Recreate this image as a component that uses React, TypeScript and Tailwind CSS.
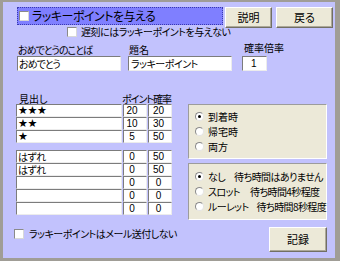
import React from "react";

const sunken =
  "bg-white border border-t-[#7c7c7c] border-l-[#7c7c7c] border-r-[#ececec] border-b-[#ececec] overflow-hidden";

const CheckBox: React.FC = () => (
  <span className="inline-block w-[10px] h-[10px] shrink-0 bg-white border border-t-[#8a8a8a] border-l-[#8a8a8a] border-r-[#d8d8d8] border-b-[#d8d8d8]" />
);

const Radio: React.FC<{ on?: boolean }> = ({ on }) => (
  <span className="w-[9px] h-[9px] shrink-0 rounded-full bg-white border border-t-[#8a8a8a] border-l-[#8a8a8a] border-r-[#e4e4e4] border-b-[#e4e4e4] flex items-center justify-center">
    {on && <span className="w-[3px] h-[3px] rounded-full bg-black" />}
  </span>
);

const WinButton: React.FC<{ label: string; className?: string }> = ({ label, className }) => (
  <button
    className={`bg-[#ece9d8] border border-t-white border-l-white border-r-[#716f64] border-b-[#716f64] shadow-[inset_-1px_-1px_0_#aca899] text-[11px] leading-none flex items-center justify-center ${className ?? ""}`}
  >
    {label}
  </button>
);

const rows1 = [
  { name: "★★★", point: "20", rate: "20", star: true },
  { name: "★★", point: "10", rate: "30", star: true },
  { name: "★", point: "5", rate: "50", star: true },
];

const rows2 = [
  { name: "はずれ", point: "0", rate: "50" },
  { name: "はずれ", point: "0", rate: "50" },
  { name: "", point: "0", rate: "0" },
  { name: "", point: "0", rate: "0" },
  { name: "", point: "0", rate: "0" },
];

const Row: React.FC<{ name: string; point: string; rate: string; star?: boolean }> = ({ name, point, rate, star }) => (
  <div className="flex gap-[1px] h-[13px]">
    <div
      className={`${sunken} w-[106px] px-[1px] flex items-center ${
        star ? "font-['DejaVu_Sans'] text-[11px] leading-[11px] tracking-[-0.3px]" : "text-[10px] leading-[10px] tracking-[-0.5px]"
      }`}
    >
      {name}
    </div>
    <div className={`${sunken} w-[24px] flex items-center justify-center pr-[6px] text-[10px] leading-[10px] font-['Liberation_Sans']`}>{point}</div>
    <div className={`${sunken} w-[24px] flex items-center justify-center pr-[3px] text-[10px] leading-[10px] font-['Liberation_Sans']`}>{rate}</div>
  </div>
);

export default function App() {
  return (
    <div className="w-[340px] h-[261px] border-l-[3px] border-t-[2px] border-r-[5px] border-b-[3px] border-[#a09d96] bg-[#c2c2fd] text-black font-['Noto_Sans_CJK_JP',sans-serif] [font-feature-settings:'palt'] whitespace-nowrap overflow-hidden">
      {/* top row */}
      <div className="flex items-start pt-[5px]">
        <div className="ml-[14px] w-[206px]">
          <div className="h-[18px] bg-[#7f7fff] border border-dotted border-[#3a3ab0] flex items-center pl-[1px] gap-[3px]">
            <CheckBox />
            <span className="text-[12px] tracking-[-0.5px] leading-none">ラッキーポイントを与える</span>
          </div>
          <div className="flex items-center gap-[4px] ml-[50px] mt-[2px] h-[10px]">
            <CheckBox />
            <span className="text-[10px] tracking-[-0.5px] leading-none">遅刻にはラッキーポイントを与えない</span>
          </div>
        </div>
        <div className="flex gap-[4px] ml-[2px]">
          <WinButton label="説明" className="w-[47px] h-[21px]" />
          <WinButton label="戻る" className="w-[57px] h-[21px]" />
        </div>
      </div>

      {/* fields */}
      <div className="flex mt-[8px] ml-[14px] text-[10px] leading-none">
        <div className="flex flex-col w-[104px]">
          <span className="h-[11px] pl-[1px] tracking-[-1px]">おめでとうのことば</span>
          <div className={`${sunken} h-[15px] flex items-center px-[1px] tracking-[-1px]`}>おめでとう</div>
        </div>
        <div className="flex flex-col w-[104px] ml-[7px]">
          <span className="h-[11px] pl-[1px]">題名</span>
          <div className={`${sunken} h-[15px] flex items-center px-[2px] tracking-[-0.5px]`}>ラッキーポイント</div>
        </div>
        <div className="flex flex-col ml-[10px]">
          <span className="h-[11px] pl-[2px] -mt-[2px] mb-[2px]">確率倍率</span>
          <div className={`${sunken} w-[25px] h-[15px] flex items-center pl-[8px] font-['Liberation_Sans']`}>1</div>
        </div>
      </div>

      {/* main */}
      <div className="flex mt-[23px]">
        <div className="ml-[13px] flex flex-col">
          <div className="flex h-[10px] text-[10px] leading-none items-end">
            <span className="w-[106px] pl-[3px]">見出し</span>
            <span className="tracking-[-1px]">ポイント確率</span>
          </div>
          <div className="flex flex-col">
            {rows1.map((r, i) => (
              <Row key={i} {...r} />
            ))}
          </div>
          <div className="flex flex-col mt-[7px]">
            {rows2.map((r, i) => (
              <Row key={i} {...r} />
            ))}
          </div>
        </div>

        <div className="ml-[16px] mt-[10px] flex flex-col gap-[4px] text-[10px] leading-none">
          <div className="w-[139px] h-[55px] bg-[#ece9d8] border border-t-[#9c9c9c] border-l-[#9c9c9c] border-r-white border-b-white flex flex-col justify-center gap-[5px] pl-[6px]">
            <div className="flex items-center gap-[4px] h-[10px]">
              <Radio on />
              <span>到着時</span>
            </div>
            <div className="flex items-center gap-[4px] h-[10px]">
              <Radio />
              <span>帰宅時</span>
            </div>
            <div className="flex items-center gap-[4px] h-[10px]">
              <Radio />
              <span>両方</span>
            </div>
          </div>
          <div className="w-[139px] h-[57px] bg-[#ece9d8] border border-t-[#9c9c9c] border-l-[#9c9c9c] border-r-white border-b-white flex flex-col justify-center gap-[5px] pl-[6px] tracking-[-0.6px]">
            <div className="flex items-center gap-[4px] h-[10px]">
              <Radio on />
              <span>なし</span>
              <span className="ml-[5px]">待ち時間はありません</span>
            </div>
            <div className="flex items-center gap-[4px] h-[10px]">
              <Radio />
              <span>スロット</span>
              <span className="ml-[6px]">待ち時間4秒程度</span>
            </div>
            <div className="flex items-center gap-[4px] h-[10px]">
              <Radio />
              <span>ルーレット</span>
              <span className="ml-[4px]">待ち時間8秒程度</span>
            </div>
          </div>
        </div>
      </div>

      {/* bottom */}
      <div className="flex items-start justify-between mt-[7px]">
        <div className="flex items-center gap-[5px] ml-[11px] mt-[2px] h-[10px]">
          <CheckBox />
          <span className="text-[10px] tracking-[-0.5px] leading-none">ラッキーポイントはメール送付しない</span>
        </div>
        <WinButton label="記録" className="w-[58px] h-[25px] mr-[8px]" />
      </div>
    </div>
  );
}
